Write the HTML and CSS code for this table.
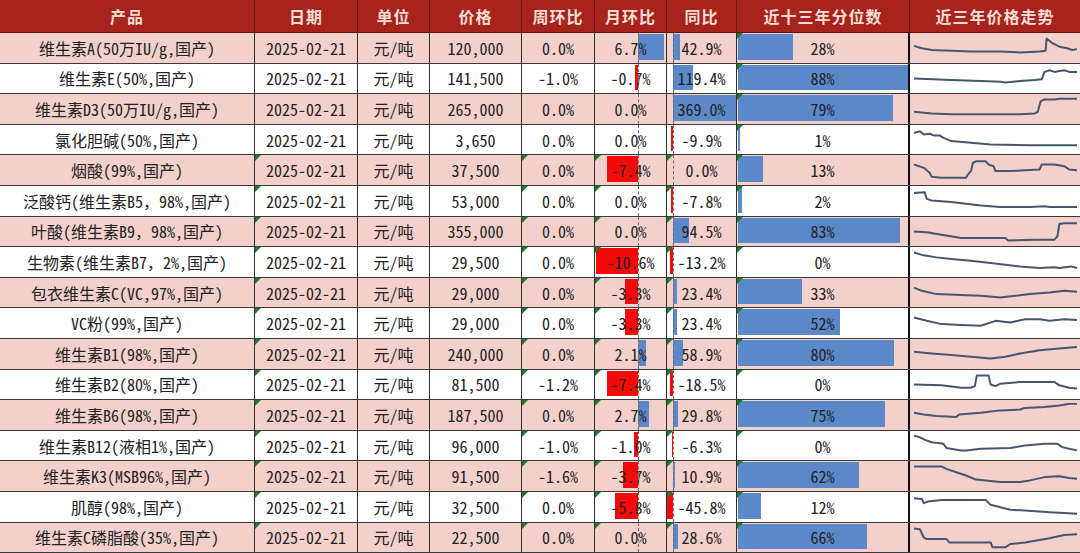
FILE: index.html
```html
<!DOCTYPE html>
<html lang="zh-CN">
<head>
<meta charset="utf-8">
<title>维生素价格</title>
<link rel="stylesheet" href="styles.css">
</head>
<body>
<div class="sheet">
  <div class="row head">
    <div class="c">产品</div><div class="c">日期</div><div class="c">单位</div><div class="c">价格</div><div class="c">周环比</div><div class="c">月环比</div><div class="c">同比</div><div class="c">近十三年分位数</div><div class="c">近三年价格走势</div>
  </div>

  <div class="row pink">
    <div class="c">维生素A(50万IU/g,国产)</div><div class="c">2025-02-21</div><div class="c">元/吨</div><div class="c">120,000</div><div class="c">0.0%</div>
    <div class="c mom"><i class="ax"></i><b class="bar pos" style="left:43px;width:26px"></b><span>6.7%</span></div>
    <div class="c yoy"><i class="ax"></i><b class="bar pos" style="left:6px;width:7px"></b><span>42.9%</span></div>
    <div class="c pct tri"><b class="bar pos" style="width:55px"></b><span>28%</span></div>
    <div class="c trend"><svg viewBox="0 0 170 30" preserveAspectRatio="none"><polyline points="2,12 10,15 20,17 40,18 60,19 90,19 110,20 130,19 136,18 137,3 142,8 150,13 158,15 163,17 168,16"/></svg></div>
  </div>

  <div class="row">
    <div class="c">维生素E(50%,国产)</div><div class="c">2025-02-21</div><div class="c">元/吨</div><div class="c">141,500</div><div class="c">-1.0%</div>
    <div class="c mom"><i class="ax"></i><b class="bar neg" style="left:40px;width:3px"></b><span>-0.7%</span></div>
    <div class="c yoy"><i class="ax"></i><b class="bar pos" style="left:6px;width:20px"></b><span>119.4%</span></div>
    <div class="c pct tri"><b class="bar pos" style="width:172px"></b><span>88%</span></div>
    <div class="c trend"><svg viewBox="0 0 170 30" preserveAspectRatio="none"><polyline points="2,14 40,16 70,17 90,18 95,19 110,17 125,16 132,15 135,6 140,4 145,6 150,5 155,4 160,6 168,6"/></svg></div>
  </div>

  <div class="row pink">
    <div class="c">维生素D3(50万IU/g,国产)</div><div class="c">2025-02-21</div><div class="c">元/吨</div><div class="c">265,000</div><div class="c">0.0%</div>
    <div class="c mom"><i class="ax"></i><span>0.0%</span></div>
    <div class="c yoy"><i class="ax"></i><b class="bar pos" style="left:6px;width:63px"></b><span>369.0%</span></div>
    <div class="c pct tri"><b class="bar pos" style="width:155px"></b><span>79%</span></div>
    <div class="c trend"><svg viewBox="0 0 170 30" preserveAspectRatio="none"><polyline points="2,18 20,20 40,21 80,21 110,21 125,20 128,18 131,5 135,3 145,3 150,2 168,2"/></svg></div>
  </div>

  <div class="row">
    <div class="c">氯化胆碱(50%,国产)</div><div class="c">2025-02-21</div><div class="c">元/吨</div><div class="c">3,650</div><div class="c">0.0%</div>
    <div class="c mom"><i class="ax"></i><span>0.0%</span></div>
    <div class="c yoy"><i class="ax"></i><b class="bar neg" style="left:4px;width:2px"></b><span>-9.9%</span></div>
    <div class="c pct tri"><b class="bar pos" style="width:2px"></b><span>1%</span></div>
    <div class="c trend"><svg viewBox="0 0 170 30" preserveAspectRatio="none"><polyline points="2,6 8,4 12,8 18,7 22,9 28,9 32,12 40,16 60,18 80,20 120,21 160,21 168,21"/></svg></div>
  </div>

  <div class="row pink">
    <div class="c">烟酸(99%,国产)</div><div class="c tri">2025-02-21</div><div class="c">元/吨</div><div class="c">37,500</div><div class="c tri">0.0%</div>
    <div class="c mom tri"><i class="ax"></i><b class="bar neg" style="left:12px;width:31px"></b><span>-7.4%</span></div>
    <div class="c yoy tri"><i class="ax"></i><span>0.0%</span></div>
    <div class="c pct tri"><b class="bar pos" style="width:25px"></b><span>13%</span></div>
    <div class="c trend"><svg viewBox="0 0 170 30" preserveAspectRatio="none"><polyline points="2,8 12,12 18,18 20,23 30,24 55,24 57,20 60,16 62,6 65,4 75,4 78,8 83,10 85,16 100,16 115,15 130,14 132,8 145,8 155,10 160,14 168,15"/></svg></div>
  </div>

  <div class="row">
    <div class="c">泛酸钙(维生素B5<em class="fw">，</em>98%,国产)</div><div class="c tri">2025-02-21</div><div class="c">元/吨</div><div class="c">53,000</div><div class="c tri">0.0%</div>
    <div class="c mom tri"><i class="ax"></i><span>0.0%</span></div>
    <div class="c yoy tri"><i class="ax"></i><b class="bar neg" style="left:4px;width:2px"></b><span>-7.8%</span></div>
    <div class="c pct tri"><b class="bar pos" style="width:4px"></b><span>2%</span></div>
    <div class="c trend"><svg viewBox="0 0 170 30" preserveAspectRatio="none"><polyline points="2,5 13,4 15,12 20,14 40,16 70,20 90,22 120,22 135,21 140,22 168,22"/></svg></div>
  </div>

  <div class="row pink">
    <div class="c">叶酸(维生素B9<em class="fw">，</em>98%,国产)</div><div class="c tri">2025-02-21</div><div class="c">元/吨</div><div class="c">355,000</div><div class="c tri">0.0%</div>
    <div class="c mom tri"><i class="ax"></i><span>0.0%</span></div>
    <div class="c yoy tri"><i class="ax"></i><b class="bar pos" style="left:6px;width:16px"></b><span>94.5%</span></div>
    <div class="c pct tri"><b class="bar pos" style="width:162px"></b><span>83%</span></div>
    <div class="c trend"><svg viewBox="0 0 170 30" preserveAspectRatio="none"><polyline points="2,14 15,15 30,18 50,22 80,22 95,22 98,25 125,24 145,24 148,20 150,5 155,4 168,4"/></svg></div>
  </div>

  <div class="row">
    <div class="c">生物素(维生素B7<em class="fw">，</em>2%,国产)</div><div class="c tri">2025-02-21</div><div class="c">元/吨</div><div class="c">29,500</div><div class="c tri">0.0%</div>
    <div class="c mom tri"><i class="ax"></i><b class="bar neg" style="left:1px;width:42px"></b><span>-10.6%</span></div>
    <div class="c yoy tri"><i class="ax"></i><b class="bar neg" style="left:3px;width:3px"></b><span>-13.2%</span></div>
    <div class="c pct tri"><span>0%</span></div>
    <div class="c trend"><svg viewBox="0 0 170 30" preserveAspectRatio="none"><polyline points="2,3 10,6 15,7 25,9 40,11 60,13 80,16 110,20 130,22 145,21 150,22 162,20 168,22"/></svg></div>
  </div>

  <div class="row pink">
    <div class="c">包衣维生素C(VC,97%,国产)</div><div class="c tri">2025-02-21</div><div class="c">元/吨</div><div class="c">29,000</div><div class="c tri">0.0%</div>
    <div class="c mom tri"><i class="ax"></i><b class="bar neg" style="left:30px;width:13px"></b><span>-3.3%</span></div>
    <div class="c yoy tri"><i class="ax"></i><b class="bar pos" style="left:6px;width:4px"></b><span>23.4%</span></div>
    <div class="c pct tri"><b class="bar pos" style="width:64px"></b><span>33%</span></div>
    <div class="c trend"><svg viewBox="0 0 170 30" preserveAspectRatio="none"><polyline points="2,8 10,12 25,16 50,17 70,18 90,20 105,18 120,16 140,14 155,12 168,13"/></svg></div>
  </div>

  <div class="row">
    <div class="c">VC粉(99%,国产)</div><div class="c tri">2025-02-21</div><div class="c">元/吨</div><div class="c">29,000</div><div class="c tri">0.0%</div>
    <div class="c mom tri"><i class="ax"></i><b class="bar neg" style="left:30px;width:13px"></b><span>-3.3%</span></div>
    <div class="c yoy tri"><i class="ax"></i><b class="bar pos" style="left:6px;width:4px"></b><span>23.4%</span></div>
    <div class="c pct tri"><b class="bar pos" style="width:102px"></b><span>52%</span></div>
    <div class="c trend"><svg viewBox="0 0 170 30" preserveAspectRatio="none"><polyline points="2,8 15,12 30,16 50,17 70,18 85,12 100,14 115,10 130,10 140,12 155,10 168,11"/></svg></div>
  </div>

  <div class="row pink">
    <div class="c">维生素B1(98%,国产)</div><div class="c tri">2025-02-21</div><div class="c">元/吨</div><div class="c">240,000</div><div class="c tri">0.0%</div>
    <div class="c mom tri"><i class="ax"></i><b class="bar pos" style="left:43px;width:8px"></b><span>2.1%</span></div>
    <div class="c yoy tri"><i class="ax"></i><b class="bar pos" style="left:6px;width:10px"></b><span>58.9%</span></div>
    <div class="c pct tri"><b class="bar pos" style="width:156px"></b><span>80%</span></div>
    <div class="c trend"><svg viewBox="0 0 170 30" preserveAspectRatio="none"><polyline points="2,12 20,14 40,16 60,18 80,20 95,18 110,14 130,10 150,8 168,6"/></svg></div>
  </div>

  <div class="row">
    <div class="c">维生素B2(80%,国产)</div><div class="c tri">2025-02-21</div><div class="c">元/吨</div><div class="c">81,500</div><div class="c tri">-1.2%</div>
    <div class="c mom tri"><i class="ax"></i><b class="bar neg" style="left:12px;width:31px"></b><span>-7.4%</span></div>
    <div class="c yoy tri"><i class="ax"></i><b class="bar neg" style="left:3px;width:3px"></b><span>-18.5%</span></div>
    <div class="c pct tri"><span>0%</span></div>
    <div class="c trend"><svg viewBox="0 0 170 30" preserveAspectRatio="none"><polyline points="2,14 30,15 50,18 60,18 64,16 66,3 78,3 80,14 85,16 90,13 110,11 145,11 150,15 160,18 168,19"/></svg></div>
  </div>

  <div class="row pink">
    <div class="c">维生素B6(98%,国产)</div><div class="c tri">2025-02-21</div><div class="c">元/吨</div><div class="c">187,500</div><div class="c tri">0.0%</div>
    <div class="c mom tri"><i class="ax"></i><b class="bar pos" style="left:43px;width:11px"></b><span>2.7%</span></div>
    <div class="c yoy tri"><i class="ax"></i><b class="bar pos" style="left:6px;width:5px"></b><span>29.8%</span></div>
    <div class="c pct tri"><b class="bar pos" style="width:147px"></b><span>75%</span></div>
    <div class="c trend"><svg viewBox="0 0 170 30" preserveAspectRatio="none"><polyline points="2,12 12,14 25,16 45,17 48,14 70,12 90,9 110,8 115,6 135,5 150,3 160,1 168,1"/></svg></div>
  </div>

  <div class="row">
    <div class="c">维生素B12(液相1%,国产)</div><div class="c tri">2025-02-21</div><div class="c">元/吨</div><div class="c">96,000</div><div class="c tri">-1.0%</div>
    <div class="c mom tri"><i class="ax"></i><b class="bar neg" style="left:39px;width:4px"></b><span>-1.0%</span></div>
    <div class="c yoy tri"><i class="ax"></i><b class="bar neg" style="left:5px;width:1px"></b><span>-6.3%</span></div>
    <div class="c pct tri"><span>0%</span></div>
    <div class="c trend"><svg viewBox="0 0 170 30" preserveAspectRatio="none"><polyline points="2,2 8,4 15,8 20,10 32,12 35,17 50,20 55,20 70,18 100,17 115,14 135,12 148,12 153,16 160,18 168,20"/></svg></div>
  </div>

  <div class="row pink">
    <div class="c">维生素K3(MSB96%,国产)</div><div class="c tri">2025-02-21</div><div class="c">元/吨</div><div class="c">91,500</div><div class="c tri">-1.6%</div>
    <div class="c mom tri"><i class="ax"></i><b class="bar neg" style="left:28px;width:15px"></b><span>-3.7%</span></div>
    <div class="c yoy tri"><i class="ax"></i><b class="bar pos" style="left:6px;width:2px"></b><span>10.9%</span></div>
    <div class="c pct tri"><b class="bar pos" style="width:121px"></b><span>62%</span></div>
    <div class="c trend"><svg viewBox="0 0 170 30" preserveAspectRatio="none"><polyline points="2,3 30,3 35,6 45,10 55,14 65,19 75,20 90,22 110,22 120,20 135,16 150,15 160,17 168,18"/></svg></div>
  </div>

  <div class="row">
    <div class="c">肌醇(98%,国产)</div><div class="c tri">2025-02-21</div><div class="c">元/吨</div><div class="c">32,500</div><div class="c tri">0.0%</div>
    <div class="c mom tri"><i class="ax"></i><b class="bar neg" style="left:20px;width:23px"></b><span>-5.8%</span></div>
    <div class="c yoy tri"><i class="ax"></i><b class="bar neg" style="left:0;width:6px"></b><span>-45.8%</span></div>
    <div class="c pct tri"><b class="bar pos" style="width:23px"></b><span>12%</span></div>
    <div class="c trend"><svg viewBox="0 0 170 30" preserveAspectRatio="none"><polyline points="2,4 10,5 12,10 16,8 30,6 75,6 80,12 90,15 100,18 115,19 140,21 155,22 168,23"/></svg></div>
  </div>

  <div class="row pink">
    <div class="c">维生素C磷脂酸(35%,国产)</div><div class="c tri">2025-02-21</div><div class="c">元/吨</div><div class="c">22,500</div><div class="c tri">0.0%</div>
    <div class="c mom tri"><i class="ax"></i><span>0.0%</span></div>
    <div class="c yoy tri"><i class="ax"></i><b class="bar pos" style="left:6px;width:5px"></b><span>28.6%</span></div>
    <div class="c pct tri"><b class="bar pos" style="width:129px"></b><span>66%</span></div>
    <div class="c trend"><svg viewBox="0 0 170 30" preserveAspectRatio="none"><polyline points="2,3 8,4 12,14 15,16 35,16 38,20 80,20 82,26 95,26 100,22 115,20 140,15 155,11 168,10"/></svg></div>
  </div>
</div>
</body>
</html>
```

FILE: styles.css
```css
html, body {
  margin: 0;
  padding: 0;
  background: #ffffff;
}

.sheet {
  width: 1080px;
  height: 553px;
  display: flex;
  flex-direction: column;
  font-family: "Noto Sans CJK SC", "Noto Sans", sans-serif;
  font-feature-settings: "hwid" 1;
  font-size: 16px;
  color: #222222;
}

.row {
  flex: 1 1 0;
  display: grid;
  grid-template-columns: 255px 103px 72px 92px 73px 72px 70px 173px 170px;
  border-bottom: 1px solid #3a3a3a;
  background: #ffffff;
  min-height: 0;
}

.row.pink {
  background: #f3d0cb;
}

.row.head {
  flex: 0 0 32px;
  background: #a6241b;
  color: #f7ddd5;
  font-weight: bold;
  letter-spacing: 1px;
  border-bottom: 1px solid #5a1410;
}

.c {
  position: relative;
  display: flex;
  align-items: center;
  justify-content: center;
  border-right: 1px solid #2e2e2e;
  white-space: nowrap;
  overflow: hidden;
  line-height: 1;
}

.head .c {
  border-right: 1px solid #6a1a14;
}

.c:last-child {
  border-right: none;
}

.c.pct {
  border-right: 2px solid #111111;
}

.fw {
  font-style: normal;
  font-feature-settings: normal;
}

.c span {
  position: relative;
  z-index: 2;
}

.bar {
  position: absolute;
  top: 1px;
  bottom: 3px;
  z-index: 1;
}

.bar.pos {
  background: #5b88c8;
}

.bar.neg {
  background: #f50a0a;
}

.pct .bar {
  left: 1px;
}

.ax {
  position: absolute;
  top: 0;
  bottom: 0;
  width: 0;
  border-left: 1px dashed #6a6a6a;
  z-index: 3;
}

.mom .ax {
  left: 43px;
}

.yoy .ax {
  left: 6px;
}

.tri::before {
  content: "";
  position: absolute;
  top: 0;
  left: 0;
  width: 0;
  height: 0;
  border-top: 6px solid #1f7a2a;
  border-right: 6px solid transparent;
  z-index: 4;
}

.trend {
  padding: 3px 1px 2px 2px;
  align-items: stretch;
}

.trend svg {
  width: 100%;
  height: 100%;
  display: block;
}

.trend polyline {
  fill: none;
  stroke: #46566f;
  stroke-width: 2;
  vector-effect: non-scaling-stroke;
  stroke-linejoin: round;
}
```
